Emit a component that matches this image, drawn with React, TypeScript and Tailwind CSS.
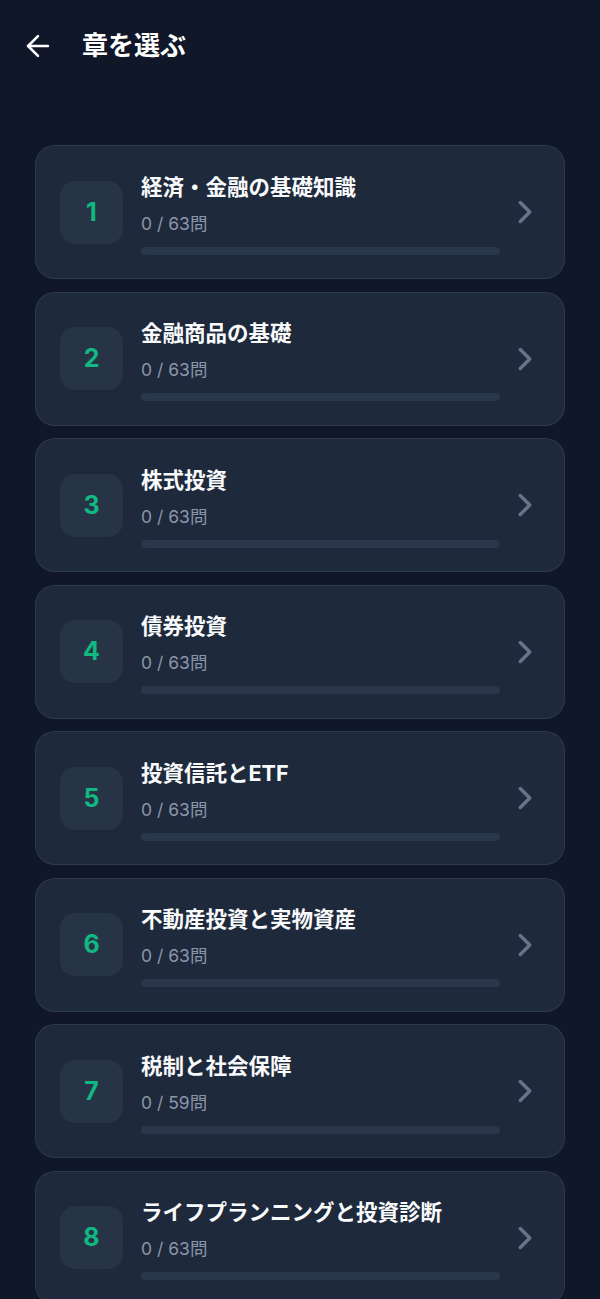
import React from 'react';
import { ArrowLeft, ChevronRight } from 'lucide-react';

const chapters = [
  { title: '経済・金融の基礎知識', total: 63 },
  { title: '金融商品の基礎', total: 63 },
  { title: '株式投資', total: 63 },
  { title: '債券投資', total: 63 },
  { title: '投資信託とETF', total: 63 },
  { title: '不動産投資と実物資産', total: 63 },
  { title: '税制と社会保障', total: 59 },
  { title: 'ライフプランニングと投資診断', total: 63 },
];

const font = { fontFamily: 'Inter, "Noto Sans CJK JP", sans-serif' };

export default function App() {
  return (
    <div className="min-h-screen bg-[#0f1729] text-white" style={font}>
      {/* Header */}
      <header className="flex items-center h-[92px] pl-[21px]">
        <ArrowLeft size={34} strokeWidth={1.8} className="text-white" />
        <h1 className="ml-[27px] text-[26px] font-bold leading-none">章を選ぶ</h1>
      </header>

      {/* Chapter list */}
      <div className="flex flex-col gap-[12.5px] px-[35px] pt-[53px] pb-6">
        {chapters.map((c, i) => (
          <div
            key={i}
            className="flex items-center h-[134px] rounded-[20px] border border-[#334155]/70 bg-[#1e293b] pl-[24px] pr-[20px]"
          >
            <div className="flex items-center justify-center w-[63px] h-[63px] shrink-0 rounded-[15px] bg-[#273446]">
              <span className="text-[25px] font-bold text-[#10b981] leading-none">{i + 1}</span>
            </div>
            <div className="flex-1 min-w-0 ml-[18px] flex flex-col pt-[2px]">
              <div className="text-[21.5px] font-bold leading-[30px] text-[#f8fafc]">{c.title}</div>
              <div className="mt-[9px] text-[17.5px] leading-[26px] text-[#8a96a8]">0 / {c.total}問</div>
              <div className="mt-[10px] h-[8px] rounded-full bg-[#2a3649]" />
            </div>
            <ChevronRight size={38} strokeWidth={2.2} className="ml-[6px] shrink-0 text-[#64748b]" />
          </div>
        ))}
      </div>
    </div>
  );
}
